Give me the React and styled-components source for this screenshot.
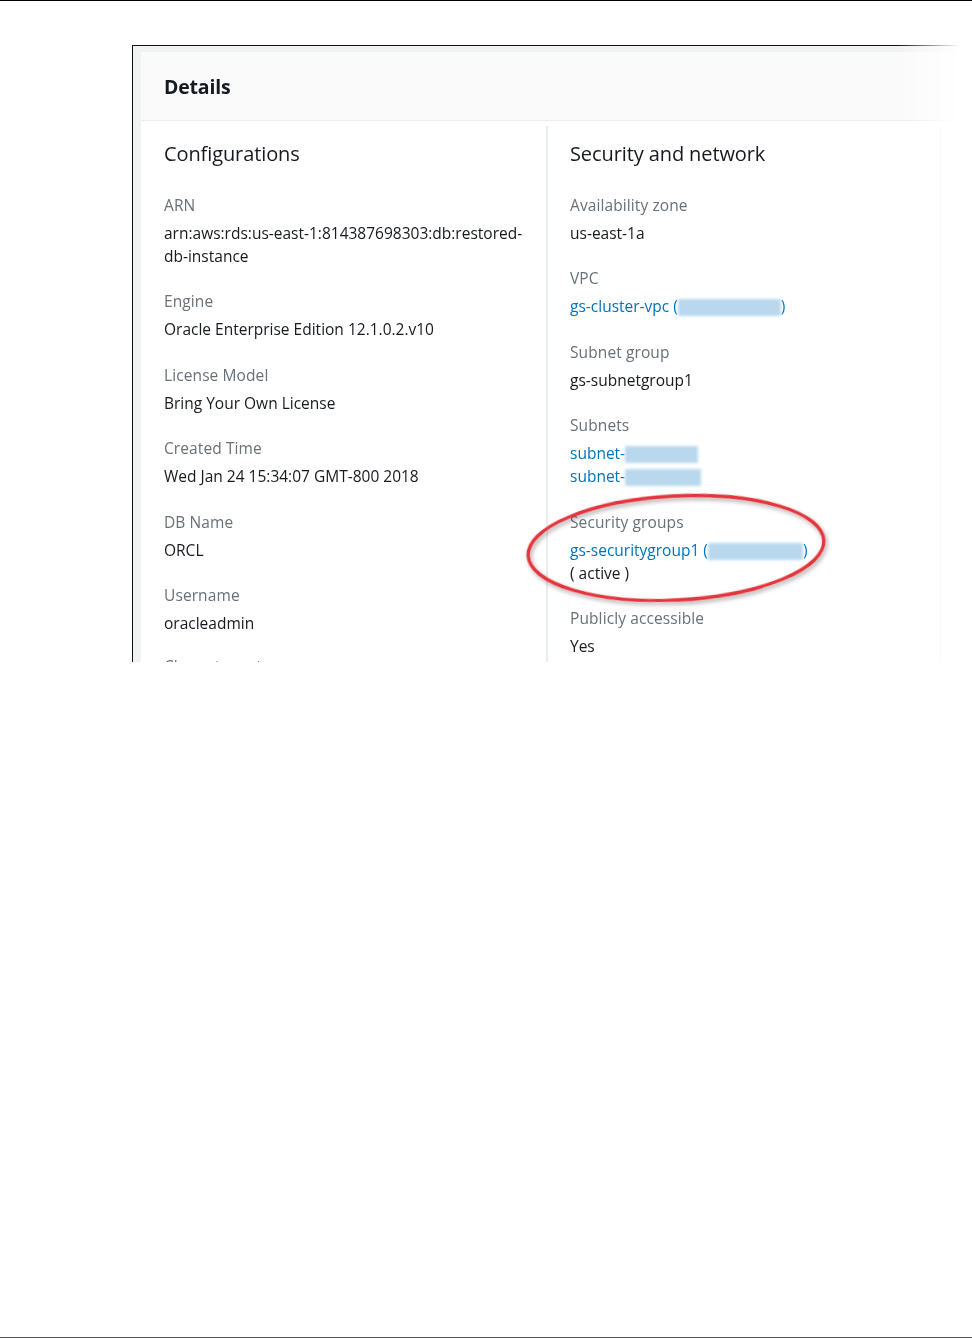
import React from "react";
import styled, { createGlobalStyle } from "styled-components";

const Global = createGlobalStyle`
  html, body { margin: 0; padding: 0; background: #fff; }
  body { font-family: "Open Sans", "Noto Sans", sans-serif; }
  * { box-sizing: border-box; }
`;

const Page = styled.div`
  height: 1339px;
  border-top: 1px solid #000;
  display: flex;
  flex-direction: column;
  padding: 44px 0 1px 132px;
`;

const BottomRule = styled.div`
  margin-top: auto;
  margin-left: -132px;
  height: 1px;
  background: #555;
`;

const Figure = styled.div`
  position: relative;
  width: 840px;
  height: 617px;
  border-top: 1px solid #111;
  border-left: 1px solid #111;
  background: #f1f2f2;
  overflow: hidden;
  -webkit-mask-image: linear-gradient(to right, #000 0, #000 765px, transparent 828px);
  mask-image: linear-gradient(to right, #000 0, #000 765px, transparent 828px);
`;

const Card = styled.div`
  margin: 6px 0 0 8px;
  background: #fff;
  height: 100%;
`;

const Header = styled.div`
  height: 69px;
  background: #fafafa;
  border-bottom: 1px solid #eaeded;
  display: flex;
  align-items: center;
  padding: 0 0 0 23px;
`;

const Title = styled.h2`
  margin: 0;
  font-size: 19.5px;
  font-weight: 700;
  color: #16191f;
  letter-spacing: -0.2px;
`;

const Body = styled.div`
  display: grid;
  grid-template-columns: 407px 393px;
  padding-top: 5px;
  height: 100%;
`;

const Column = styled.div`
  padding-left: ${(p) => p.$pad}px;
  border-right: ${(p) => p.$border};
`;

const Heading = styled.h3`
  margin: 14px 0 26px;
  font-size: 20px;
  line-height: 28px;
  font-weight: 500;
  color: #16191f;
  letter-spacing: -0.1px;
`;

const Field = styled.div`
  margin-bottom: ${(p) => (p.$tight ? 20 : 22.4)}px;
`;

const Label = styled.div`
  font-size: 15.5px;
  line-height: 22px;
  font-weight: 500;
  color: #687078;
  margin-bottom: 6px;
  letter-spacing: 0.1px;
`;

const Value = styled.div`
  font-size: 15.5px;
  line-height: 23px;
  font-weight: 500;
  color: #16191f;
  letter-spacing: 0;
`;

const Link = styled.span`
  color: #0073bb;
`;

const Redacted = styled.span`
  display: inline-block;
  width: ${(p) => p.$w}px;
  height: 17px;
  vertical-align: -4px;
  background: #b9d8ee;
  filter: blur(1.5px);
`;

const Annotation = styled.svg`
  position: absolute;
  left: 388px;
  top: 440px;
  overflow: visible;
`;

const config = [
  { label: "Engine", value: "Oracle Enterprise Edition 12.1.0.2.v10" },
  { label: "License Model", value: "Bring Your Own License" },
  { label: "Created Time", value: "Wed Jan 24 15:34:07 GMT-800 2018" },
  { label: "DB Name", value: "ORCL" },
];

export default function App() {
  return (
    <>
      <Global />
      <Page>
        <Figure>
          <Card>
            <Header>
              <Title>Details</Title>
            </Header>
            <Body>
              <Column $pad={23} $border="2px solid #eaeded">
                <Heading>Configurations</Heading>
                <Field>
                  <Label>ARN</Label>
                  <Value>arn:aws:rds:us-east-1:814387698303:db:restored-</Value>
                  <Value>db-instance</Value>
                </Field>
                {config.map((f) => (
                  <Field key={f.label}>
                    <Label>{f.label}</Label>
                    <Value>{f.value}</Value>
                  </Field>
                ))}
                <Field $tight>
                  <Label>Username</Label>
                  <Value>oracleadmin</Value>
                </Field>
                <Field>
                  <Label>Character set</Label>
                </Field>
              </Column>
              <Column $pad={22} $border="1px solid #ececec">
                <Heading>Security and network</Heading>
                <Field>
                  <Label>Availability zone</Label>
                  <Value>us-east-1a</Value>
                </Field>
                <Field>
                  <Label>VPC</Label>
                  <Value>
                    <Link>
                      gs-cluster-vpc (<Redacted $w={103} />)
                    </Link>
                  </Value>
                </Field>
                <Field>
                  <Label>Subnet group</Label>
                  <Value>gs-subnetgroup1</Value>
                </Field>
                <Field>
                  <Label>Subnets</Label>
                  <Value>
                    <Link>
                      subnet-<Redacted $w={73} />
                    </Link>
                  </Value>
                  <Value>
                    <Link>
                      subnet-<Redacted $w={76} />
                    </Link>
                  </Value>
                </Field>
                <Field>
                  <Label>Security groups</Label>
                  <Value>
                    <Link>
                      gs-securitygroup1 (<Redacted $w={95} />)
                    </Link>
                  </Value>
                  <Value>( active )</Value>
                </Field>
                <Field>
                  <Label>Publicly accessible</Label>
                  <Value>Yes</Value>
                </Field>
              </Column>
            </Body>
          </Card>
          <Annotation width="310" height="125" viewBox="0 0 310 125">
            <defs>
              <filter id="sh" x="-10%" y="-20%" width="120%" height="150%">
                <feDropShadow dx="1.5" dy="2.5" stdDeviation="2" floodColor="#000" floodOpacity="0.35" />
              </filter>
            </defs>
            <ellipse
              cx="155"
              cy="62"
              rx="148"
              ry="52"
              fill="none"
              stroke="#e3363c"
              strokeWidth="3.4"
              transform="rotate(-3 155 62)"
              filter="url(#sh)"
            />
          </Annotation>
        </Figure>
        <BottomRule />
      </Page>
    </>
  );
}
